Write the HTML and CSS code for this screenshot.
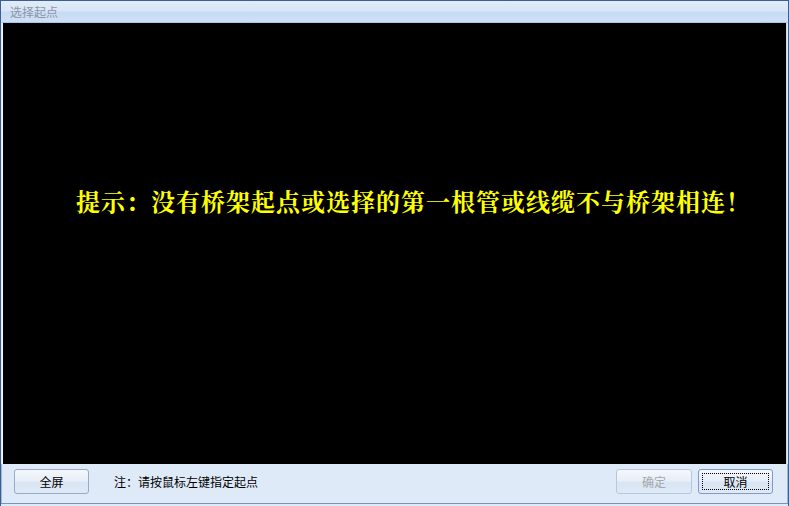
FILE: index.html
```html
<!DOCTYPE html>
<html lang="zh-CN">
<head>
<meta charset="utf-8">
<title>选择起点</title>
<link rel="stylesheet" href="styles.css">
</head>
<body>
<div class="window">
  <div class="titlebar"><span class="title">选择起点</span></div>
  <div class="viewport">
    <div class="canvas">
      <p class="hint">提示：没有桥架起点或选择的第一根管或线缆不与桥架相连！</p>
    </div>
  </div>
  <div class="footer">
    <button class="btn">全屏</button>
    <span class="note">注：请按鼠标左键指定起点</span>
    <span class="spacer"></span>
    <button class="btn" disabled>确定</button>
    <button class="btn focused"><span class="focus-ring">取消</span></button>
  </div>
</div>
</body>
</html>
```
FILE: styles.css
```css
html, body {
  margin: 0;
  padding: 0;
  width: 789px;
  height: 506px;
  overflow: hidden;
  background: #dfe9f7;
}

.window {
  box-sizing: border-box;
  width: 789px;
  height: 506px;
  display: flex;
  flex-direction: column;
  border: 1px solid #3d5f8f;
  border-bottom: none;
  background: #dfeaf8;
  font-family: "Noto Sans CJK SC", sans-serif;
  font-size: 12px;
}

.titlebar {
  height: 21px;
  flex: none;
  display: flex;
  align-items: center;
  padding-left: 9px;
  border-bottom: 1px solid #a6c6ec;
  background: linear-gradient(to bottom, #e1ebf8 0%, #d8e6f7 45%, #c7dbf4 55%, #cfe0f6 100%);
}

.title {
  color: #8c96a6;
  font-size: 12px;
  line-height: 14px;
  margin-top: 1px;
}

.viewport {
  flex: none;
  height: 441px;
  padding: 0 1px 0 1px;
  display: flex;
}

.canvas {
  flex: 1;
  background: #000;
  border-left: 1px solid #f4f7fb;
  border-right: 1px solid #d4d8de;
  display: flex;
  align-items: flex-start;
}

.hint {
  margin: 165px 0 0 73px;
  color: #ffff00;
  font-family: "Noto Serif CJK SC", "Noto Sans CJK SC", serif;
  font-weight: bold;
  font-size: 24px;
  letter-spacing: 1px;
  line-height: 26px;
  white-space: nowrap;
}

.footer {
  flex: 1;
  display: flex;
  align-items: flex-start;
  padding: 5px 15px 0 13px;
  border-bottom: 1px solid #7594c0;
  margin-bottom: 2px;
  box-shadow: inset 1px 0 0 #9fb7d8, inset -1px 0 0 #9fb7d8;
}

.btn {
  box-sizing: border-box;
  width: 75px;
  height: 25px;
  padding: 0;
  border: 1px solid #97abc6;
  border-radius: 3px;
  background: linear-gradient(to bottom, #f4f7fc 0%, #e9eff8 45%, #d9e5f4 55%, #dfe9f6 100%);
  font-family: "Noto Sans CJK SC", sans-serif;
  font-size: 12px;
  color: #000;
  display: flex;
  align-items: center;
  justify-content: center;
}

.btn:disabled {
  color: #a3a8ae;
  border-color: #b8c8dc;
  width: 76px;
}

.btn.focused {
  border-color: #7c9bc8;
  margin-left: 6px;
  padding: 3px;
}

.focus-ring {
  flex: 1;
  align-self: stretch;
  display: flex;
  align-items: center;
  justify-content: center;
  border: 1px dotted #000;
}

.note {
  margin-left: 25px;
  line-height: 25px;
  color: #000;
}

.spacer {
  flex: 1;
}
```
